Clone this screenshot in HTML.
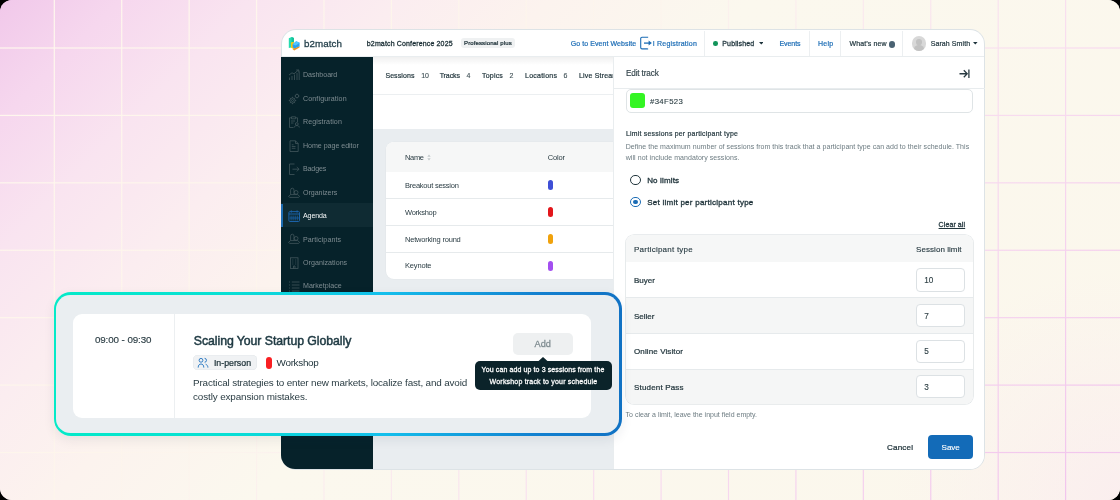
<!DOCTYPE html>
<html><head><meta charset="utf-8">
<style>
*{margin:0;padding:0;box-sizing:border-box}
html,body{width:1120px;height:500px;overflow:hidden;background:#000}
body{font-family:"Liberation Sans",sans-serif;position:relative;color:#1d333b}
.abs{position:absolute}
.t{position:absolute;white-space:nowrap;line-height:1}
#canvas{will-change:transform;position:absolute;left:0;top:0;width:1120px;height:500px;border-radius:12px;overflow:hidden;
 background:linear-gradient(125deg,#efc4ea 0%,#f5d8ee 12%,#fae9ef 24%,#fcf2ee 38%,#fbf7ee 55%,#fbf8ed 75%,#fbf6ee 100%)}
#frame{position:absolute;left:281.6px;top:30.3px;width:702.3px;height:439px;border-radius:14px;background:#fff;
 box-shadow:0 0 0 1px #dde3e6}
.side{position:absolute;left:281.1px;top:57px;width:92.3px;height:412.3px;background:#06222a;border-radius:0 0 0 14px}
.main{position:absolute;left:373.4px;top:57px;width:240.6px;height:412.3px;background:#e9edf0}
.tabs{position:absolute;left:373.4px;top:57px;width:240.6px;height:72.2px;background:#fff}
.panel{position:absolute;left:613.5px;top:57px;width:370.4px;height:412.3px;background:#fff;border-radius:0 0 14px 0}
.pshadow{position:absolute;left:612.8px;top:57px;width:1px;height:412.3px;background:#e9edef}
.hshadow{position:absolute;left:373px;top:57px;width:241px;height:8px;background:linear-gradient(rgba(0,0,0,0.06),rgba(0,0,0,0))}
.hd{font-size:8px;color:#1d333b}
.blue{color:#1b6cb5}
.div{position:absolute;top:30.5px;width:1px;height:26.5px;background:#eceff1}
.si{font-size:7.6px;color:#8c9a9f}
.ico{position:absolute}
.tab{font-size:8px;font-weight:bold;color:#22363d}
.cnt{font-size:8px;color:#5b6b71}
.cell{font-size:7.2px;color:#2a3c43}
.pill{position:absolute;width:5px;height:10px;border-radius:3px}
.sub{font-size:6.8px;color:#7f8c91}
.pt{font-size:7.6px;color:#1f333a}
.inp{position:absolute;left:916.3px;width:48.4px;height:23.2px;border:1px solid #dce1e4;border-radius:4px;background:#fff}
.inpt{font-size:7.6px;color:#3a4a50}
</style></head><body>
<div id="canvas">
<svg class="abs" style="left:0;top:0" width="1120" height="500">
<defs><linearGradient id="bgg" gradientUnits="userSpaceOnUse" x1="0" y1="0" x2="800" y2="800"><stop offset="0.0000" stop-color="#f1c8ea"/><stop offset="0.0750" stop-color="#f6d7ee"/><stop offset="0.1562" stop-color="#f9e4f0"/><stop offset="0.2500" stop-color="#fbedf0"/><stop offset="0.3438" stop-color="#fcf3ee"/><stop offset="0.4688" stop-color="#fbf8ee"/><stop offset="1.0000" stop-color="#fbf7ec"/></linearGradient>
<linearGradient id="lg" gradientUnits="userSpaceOnUse" x1="0" y1="0" x2="800" y2="800"><stop offset="0.0000" stop-color="#fff8ee"/><stop offset="0.1875" stop-color="#fef6ec"/><stop offset="0.3438" stop-color="#fdf5ec"/><stop offset="0.4250" stop-color="#fcf4ed"/><stop offset="0.5312" stop-color="#faebee"/><stop offset="0.6875" stop-color="#f8ddef"/><stop offset="1.0000" stop-color="#f1c3ed"/></linearGradient><radialGradient id="rg" gradientUnits="userSpaceOnUse" cx="1120" cy="500" r="230"><stop offset="0" stop-color="#fae8f0" stop-opacity="0.6"/><stop offset="1" stop-color="#fbeaf0" stop-opacity="0"/></radialGradient></defs>
<rect x="0" y="0" width="1120" height="500" fill="url(#bgg)"/><rect x="0" y="0" width="1120" height="500" fill="url(#rg)"/>
<rect x="53.70" y="0" width="1.2" height="500" fill="url(#lg)"/><rect x="121.12" y="0" width="1.2" height="500" fill="url(#lg)"/><rect x="188.54" y="0" width="1.2" height="500" fill="url(#lg)"/><rect x="255.96" y="0" width="1.2" height="500" fill="url(#lg)"/><rect x="323.38" y="0" width="1.2" height="500" fill="url(#lg)"/><rect x="390.80" y="0" width="1.2" height="500" fill="url(#lg)"/><rect x="458.22" y="0" width="1.2" height="500" fill="url(#lg)"/><rect x="525.64" y="0" width="1.2" height="500" fill="url(#lg)"/><rect x="593.06" y="0" width="1.2" height="500" fill="url(#lg)"/><rect x="660.48" y="0" width="1.2" height="500" fill="url(#lg)"/><rect x="727.90" y="0" width="1.2" height="500" fill="url(#lg)"/><rect x="795.32" y="0" width="1.2" height="500" fill="url(#lg)"/><rect x="862.74" y="0" width="1.2" height="500" fill="url(#lg)"/><rect x="930.16" y="0" width="1.2" height="500" fill="url(#lg)"/><rect x="997.58" y="0" width="1.2" height="500" fill="url(#lg)"/><rect x="1065.00" y="0" width="1.2" height="500" fill="url(#lg)"/><rect x="0" y="47.40" width="1120" height="1.2" fill="url(#lg)"/><rect x="0" y="114.82" width="1120" height="1.2" fill="url(#lg)"/><rect x="0" y="182.24" width="1120" height="1.2" fill="url(#lg)"/><rect x="0" y="249.66" width="1120" height="1.2" fill="url(#lg)"/><rect x="0" y="317.08" width="1120" height="1.2" fill="url(#lg)"/><rect x="0" y="384.50" width="1120" height="1.2" fill="url(#lg)"/><rect x="0" y="451.92" width="1120" height="1.2" fill="url(#lg)"/></svg>
<div id="frame"></div>
<!-- header -->
<svg class="ico" style="left:285px;top:34px" width="20" height="20" viewBox="0 0 20 20">
 <path d="M3.8 4.2 L6.6 3.1 L9 3.9 L9 9.2 L6.4 10.2 L6.4 13.6 L3.8 13.9Z" fill="#26dcb0"/>
 <path d="M6.6 3.1 L9 3.9 L9 8.2 L6.6 9Z" fill="#16c29a"/>
 <path d="M6 8.2 L9 8.1 L9 15 L6 13.8Z" fill="#f9c515"/>
 <path d="M7.5 15 L14.5 12 L14.5 13.6 L9.2 16.4Z" fill="#f2951e"/>
 <path d="M7.6 10.2 L11.2 7.3 L14.6 8.7 L14.6 12.2 L9.4 14.4 L7.6 13.2Z" fill="#2a9ff0"/>
 <path d="M7.6 10.2 L11.2 7.3 L14.6 8.7 L10.8 11.6Z" fill="#52c6ff"/>
</svg>
<div class="abs" style="left:461px;top:38px;width:54px;height:10.2px;background:#eff1f2;border-radius:3px"></div>
<svg class="ico" style="left:639px;top:36px" width="14" height="14" viewBox="0 0 14 14">
 <path d="M8.6 1.7 V1.2 H3 Q1.7 1.2 1.7 2.5 V11.6 Q1.7 12.9 3 12.9 H8.6 V12.4" fill="none" stroke="#1b6cb5" stroke-width="1.1"/>
 <path d="M5 7.1 H10.2" fill="none" stroke="#1b6cb5" stroke-width="1.3"/>
 <path d="M9.6 4.6 L12.9 7.1 L9.6 9.6Z" fill="#1b6cb5"/>
</svg>
<div class="div" style="left:704px"></div>
<div class="abs" style="left:713.2px;top:41px;width:4.6px;height:4.6px;border-radius:50%;background:#12945a"></div>
<svg class="ico" style="left:758.5px;top:42.2px" width="4.6" height="2.6" viewBox="0 0 4.6 2.6"><path d="M0 0H4.6L2.3 2.6Z" fill="#1d333b"/></svg>
<div class="div" style="left:809px"></div>
<div class="div" style="left:840px"></div>
<div class="abs" style="left:888.5px;top:41.2px;width:6.6px;height:6.6px;border-radius:50%;background:#4a6272"></div>
<div class="div" style="left:902.3px"></div>
<div class="abs" style="left:911.5px;top:36.3px;width:14.7px;height:14.7px;border-radius:50%;background:#d8d8d8;overflow:hidden">
 <div class="abs" style="left:4.5px;top:3px;width:5.7px;height:5.7px;border-radius:50%;background:#c2c2c2"></div>
 <div class="abs" style="left:2.5px;top:9px;width:9.7px;height:8px;border-radius:50%;background:#c2c2c2"></div>
</div>
<svg class="ico" style="left:973px;top:42.2px" width="4.6" height="2.6" viewBox="0 0 4.6 2.6"><path d="M0 0H4.6L2.3 2.6Z" fill="#1d333b"/></svg>
<div class="abs" style="left:281.6px;top:56.4px;width:702.3px;height:0.8px;background:#e9edef"></div>

<div class="t" style="left:304.00px;top:39.00px;font-size:9.8px;color:#1e3b46;letter-spacing:0.067px;-webkit-text-stroke:0.274px #1e3b46;">b2match</div>
<div class="t" style="left:366.80px;top:40.00px;font-size:7.0px;color:#182c33;letter-spacing:0.150px;-webkit-text-stroke:0.280px #182c33;">b2match Conference 2025</div>
<div class="t" style="left:464.00px;top:40.00px;font-size:6.0px;color:#1a2e35;letter-spacing:0.125px;-webkit-text-stroke:0.240px #1a2e35;">Professional plus</div>
<div class="t" style="left:570.80px;top:40.00px;font-size:7.0px;color:#1b6cb5;letter-spacing:0.072px;-webkit-text-stroke:0.196px #1b6cb5;">Go to Event Website</div>
<div class="t" style="left:652.70px;top:40.00px;font-size:7.0px;color:#1b6cb5;letter-spacing:0.223px;-webkit-text-stroke:0.196px #1b6cb5;">I Registration</div>
<div class="t" style="left:722.30px;top:40.00px;font-size:7.0px;color:#1d333b;letter-spacing:0.138px;-webkit-text-stroke:0.280px #1d333b;">Published</div>
<div class="t" style="left:779.40px;top:40.00px;font-size:7.0px;color:#1b6cb5;letter-spacing:-0.040px;-webkit-text-stroke:0.196px #1b6cb5;">Events</div>
<div class="t" style="left:818.00px;top:40.00px;font-size:7.0px;color:#1b6cb5;letter-spacing:0.233px;-webkit-text-stroke:0.196px #1b6cb5;">Help</div>
<div class="t" style="left:849.60px;top:40.00px;font-size:7.0px;color:#1d333b;letter-spacing:0.100px;-webkit-text-stroke:0.196px #1d333b;">What’s new</div>
<div class="t" style="left:930.70px;top:40.00px;font-size:7.0px;color:#1d333b;letter-spacing:0.090px;-webkit-text-stroke:0.196px #1d333b;">Sarah Smith</div>

<!-- sidebar -->
<div class="side"></div>
<div class="abs" style="left:281.1px;top:203.3px;width:92.3px;height:23.7px;background:#0f2b33"></div>
<div class="abs" style="left:281.1px;top:203.5px;width:2.2px;height:23.5px;background:#1c6cb2"></div>
<svg class="ico" style="left:288px;top:69.30px" width="12" height="12" viewBox="0 0 12 12" fill="none" stroke="#46595f" stroke-width="0.75"><path d="M1.5 11V8.5M4 11V7M6.5 11V5.5M9 11V4M11.2 11V2.5" /><path d="M1 6 L4 3.8 L6 4.8 L10.5 1" /><path d="M8.2 1 H10.8 V3.4"/></svg>
<svg class="ico" style="left:288px;top:92.75px" width="12" height="12" viewBox="0 0 12 12" fill="none" stroke="#46595f" stroke-width="0.75"><circle cx="4.5" cy="7.5" r="2.6"/><circle cx="4.5" cy="7.5" r="1"/><path d="M4.5 3.8V4.9M4.5 10.1V11.2M0.8 7.5H1.9M7.1 7.5H8.2M1.9 4.9L2.6 5.6M6.4 9.4L7.1 10.1M1.9 10.1L2.6 9.4M6.4 5.6L7.1 4.9"/><circle cx="9" cy="3" r="1.7"/><path d="M9 0.6V1.3M9 4.7V5.4M6.6 3H7.3M10.7 3H11.4"/></svg>
<svg class="ico" style="left:288px;top:116.20px" width="12" height="12" viewBox="0 0 12 12" fill="none" stroke="#46595f" stroke-width="0.75"><path d="M3.5 1.8H1.5V11.5H5.5M8 1.8H9.5V6"/><path d="M3.5 0.8H7.5V2.8H3.5Z"/><path d="M3 5H7M3 7H5.5"/><circle cx="8.8" cy="8" r="1.4"/><path d="M6.3 11.5C6.5 10 7.5 9.6 8.8 9.6C10.1 9.6 11.1 10 11.3 11.5"/></svg>
<svg class="ico" style="left:288px;top:139.65px" width="12" height="12" viewBox="0 0 12 12" fill="none" stroke="#46595f" stroke-width="0.75"><path d="M2 0.8H7.5L10.2 3.5V11.5H2Z"/><path d="M7.5 0.8V3.5H10.2"/><path d="M3.8 6.5H7.5M3.8 8.3H7.5M3.8 4.8H5.5"/></svg>
<svg class="ico" style="left:288px;top:163.10px" width="12" height="12" viewBox="0 0 12 12" fill="none" stroke="#46595f" stroke-width="0.75"><path d="M6.5 1H1.5V11.5H6.5"/><path d="M4.5 6.2H11M8.8 4L11 6.2L8.8 8.4"/></svg>
<svg class="ico" style="left:288px;top:186.55px" width="12" height="12" viewBox="0 0 12 12" fill="none" stroke="#46595f" stroke-width="0.75"><path d="M2.6 7.6V3.2Q2.6 1.2 4.3 1.2Q6 1.2 6 3.2V7.6"/><circle cx="8.1" cy="5.4" r="1.9"/><path d="M0.6 9.3L2.6 7.6H9.6L11.6 9.3L10.6 10.4H1.6Z"/></svg>
<svg class="ico" style="left:288px;top:209.55px" width="12" height="12" viewBox="0 0 12 12" fill="none" stroke="#1b62a8" stroke-width="1"><rect x="0.9" y="1.6" width="10.6" height="9.9" rx="1"/><path d="M3.3 0.4V2.6M9.1 0.4V2.6M0.9 4H11.5" /><path d="M3.1 5.6V10.4M5.1 5.6V10.4M7.2 5.6V10.4M9.3 5.6V10.4M1.5 8H11" stroke-width="0.8"/></svg>
<svg class="ico" style="left:288px;top:233.45px" width="12" height="12" viewBox="0 0 12 12" fill="none" stroke="#46595f" stroke-width="0.75"><path d="M2.6 7.6V3.2Q2.6 1.2 4.3 1.2Q6 1.2 6 3.2V7.6"/><circle cx="8.1" cy="5.4" r="1.9"/><path d="M0.6 9.3L2.6 7.6H9.6L11.6 9.3L10.6 10.4H1.6Z"/></svg>
<svg class="ico" style="left:288px;top:256.90px" width="12" height="12" viewBox="0 0 12 12" fill="none" stroke="#46595f" stroke-width="0.75"><rect x="2.5" y="0.8" width="7.5" height="10.7"/><path d="M4.3 3H5.3M7.2 3H8.2M4.3 5H5.3M7.2 5H8.2M4.3 7H5.3M7.2 7H8.2M5.5 11.5V9H7V11.5"/></svg>
<svg class="ico" style="left:288px;top:280.35px" width="12" height="12" viewBox="0 0 12 12" fill="none" stroke="#46595f" stroke-width="0.75"><path d="M1 2H2M1 5H2M1 8H2M1 11H2M3.8 2H11.5M3.8 5H11.5M3.8 8H11.5M3.8 11H11.5"/></svg>
<div class="t" style="left:303.00px;top:72.00px;font-size:7.1px;color:#7e8c91;letter-spacing:-0.050px;">Dashboard</div>
<div class="t" style="left:303.00px;top:96.00px;font-size:7.1px;color:#7e8c91;letter-spacing:0.117px;">Configuration</div>
<div class="t" style="left:303.00px;top:119.00px;font-size:7.1px;color:#7e8c91;letter-spacing:0.091px;">Registration</div>
<div class="t" style="left:303.00px;top:143.00px;font-size:7.1px;color:#7e8c91;letter-spacing:-0.040px;">Home page editor</div>
<div class="t" style="left:303.00px;top:166.00px;font-size:7.1px;color:#7e8c91;letter-spacing:-0.160px;">Badges</div>
<div class="t" style="left:303.00px;top:190.00px;font-size:7.1px;color:#7e8c91;letter-spacing:-0.044px;">Organizers</div>
<div class="t" style="left:303.00px;top:213.00px;font-size:7.1px;color:#f4f6f7;letter-spacing:-0.140px;">Agenda</div>
<div class="t" style="left:303.00px;top:237.00px;font-size:7.1px;color:#7e8c91;letter-spacing:0.091px;">Participants</div>
<div class="t" style="left:303.00px;top:260.00px;font-size:7.1px;color:#7e8c91;letter-spacing:0.033px;">Organizations</div>
<div class="t" style="left:303.00px;top:283.00px;font-size:7.1px;color:#7e8c91;">Marketplace</div>


<!-- main -->
<div class="main"></div>
<div class="tabs"></div>
<div class="abs" style="left:373px;top:94px;width:241px;height:1px;background:#eceff1"></div>
<div class="hshadow"></div>

<div class="abs" style="left:385.8px;top:142.2px;width:260px;height:136.8px;background:#fff;border-radius:8px;box-shadow:0 0 0 0.6px #e3e7ea"></div>
<div class="abs" style="left:385.8px;top:142.2px;width:260px;height:29.7px;background:#f6f7f7;border-radius:8px 8px 0 0"></div>
<svg class="ico" style="left:426.5px;top:154px" width="4" height="7" viewBox="0 0 4 7"><path d="M0.3 2.8L2 0.6L3.7 2.8ZM0.3 4.2L2 6.4L3.7 4.2Z" fill="#c3cacd"/></svg>
<div class="pill" style="left:547.8px;top:180px;background:#3e4fd6"></div>
<div class="abs" style="left:385.8px;top:198px;width:260px;height:0.8px;background:#e6eaec"></div>
<div class="pill" style="left:547.8px;top:207px;background:#e3161b"></div>
<div class="abs" style="left:385.8px;top:225px;width:260px;height:0.8px;background:#e6eaec"></div>
<div class="pill" style="left:547.8px;top:234px;background:#f0a20c"></div>
<div class="abs" style="left:385.8px;top:252px;width:260px;height:0.8px;background:#e6eaec"></div>
<div class="pill" style="left:547.8px;top:261px;background:#a34ff0"></div>
<div class="t" style="left:385.40px;top:72.00px;font-size:7.0px;color:#22363d;letter-spacing:0.086px;-webkit-text-stroke:0.196px #22363d;">Sessions</div>
<div class="t" style="left:421.20px;top:72.00px;font-size:7.0px;color:#3e4f55;-webkit-text-stroke:0.105px #3e4f55;">10</div>
<div class="t" style="left:439.70px;top:72.00px;font-size:7.0px;color:#22363d;letter-spacing:-0.100px;-webkit-text-stroke:0.196px #22363d;">Tracks</div>
<div class="t" style="left:466.60px;top:72.00px;font-size:7.0px;color:#3e4f55;-webkit-text-stroke:0.105px #3e4f55;">4</div>
<div class="t" style="left:482.00px;top:72.00px;font-size:7.0px;color:#22363d;letter-spacing:0.200px;-webkit-text-stroke:0.196px #22363d;">Topics</div>
<div class="t" style="left:509.60px;top:72.00px;font-size:7.0px;color:#3e4f55;-webkit-text-stroke:0.105px #3e4f55;">2</div>
<div class="t" style="left:525.00px;top:72.00px;font-size:7.0px;color:#22363d;letter-spacing:0.250px;-webkit-text-stroke:0.196px #22363d;">Locations</div>
<div class="t" style="left:563.60px;top:72.00px;font-size:7.0px;color:#3e4f55;-webkit-text-stroke:0.105px #3e4f55;">6</div>
<div class="t" style="left:579.00px;top:72.00px;font-size:7.0px;color:#22363d;letter-spacing:0.182px;-webkit-text-stroke:0.196px #22363d;">Live Streams</div>
<div class="t" style="left:405.00px;top:154.00px;font-size:7.5px;color:#2a3c43;letter-spacing:-0.333px;">Name</div>
<div class="t" style="left:547.80px;top:154.00px;font-size:7.5px;color:#2a3c43;letter-spacing:-0.150px;">Color</div>
<div class="t" style="left:405.00px;top:182.00px;font-size:7.5px;color:#2a3c43;letter-spacing:-0.247px;">Breakout session</div>
<div class="t" style="left:405.00px;top:209.00px;font-size:7.5px;color:#2a3c43;letter-spacing:-0.286px;">Workshop</div>
<div class="t" style="left:405.00px;top:236.00px;font-size:7.5px;color:#2a3c43;letter-spacing:-0.200px;">Networking round</div>
<div class="t" style="left:405.00px;top:262.00px;font-size:7.5px;color:#2a3c43;letter-spacing:-0.167px;">Keynote</div>

<!-- panel -->
<div class="pshadow"></div><div class="panel"></div>
<svg class="ico" style="left:958.5px;top:68.5px" width="11" height="9.5" viewBox="0 0 11 9.5">
 <path d="M0.5 4.75H8 M4.8 1.3 L8.2 4.75 L4.8 8.2 M9.9 0.5V9" fill="none" stroke="#2a3b42" stroke-width="1.3"/>
</svg>
<div class="abs" style="left:613.5px;top:87.5px;width:371px;height:0.8px;background:#e8ecee"></div>
<div class="abs" style="left:625.6px;top:89px;width:347.6px;height:23.6px;border:1px solid #dfe4e6;border-radius:5px"></div>
<div class="abs" style="left:629.6px;top:92.8px;width:15.6px;height:15.6px;border-radius:3px;background:#34f523"></div>

<div class="abs" style="left:630px;top:174.8px;width:10.5px;height:10.5px;border-radius:50%;border:1.4px solid #22363d"></div>
<div class="abs" style="left:630px;top:196.8px;width:10.5px;height:10.5px;border-radius:50%;border:1.4px solid #1b6cb5"></div>
<div class="abs" style="left:632.9px;top:199.7px;width:4.7px;height:4.7px;border-radius:50%;background:#1b6cb5"></div>

<div class="abs" style="left:625.6px;top:235px;width:347px;height:169.2px;border-radius:8px;background:#fff;box-shadow:0 0 0 0.8px #e2e6e8;overflow:hidden">
 <div class="abs" style="left:0;top:0;width:100%;height:26.7px;background:#f6f7f7"></div>
 <div class="abs" style="left:0;top:62.2px;width:100%;height:36.2px;background:#f5f6f6"></div>
 <div class="abs" style="left:0;top:133.8px;width:100%;height:36px;background:#f5f6f6"></div>
 <div class="abs" style="left:0;top:62px;width:100%;height:0.8px;background:#e6eaec"></div>
 <div class="abs" style="left:0;top:98.2px;width:100%;height:0.8px;background:#e6eaec"></div>
 <div class="abs" style="left:0;top:133.6px;width:100%;height:0.8px;background:#e6eaec"></div>
</div>
<div class="inp" style="top:268.4px"></div>
<div class="inp" style="top:304px"></div>
<div class="inp" style="top:339.5px"></div>
<div class="inp" style="top:375.3px"></div>
<div class="abs" style="left:928.3px;top:435px;width:44.8px;height:23.5px;border-radius:4px;background:#136bb8"></div>
<div class="t" style="left:625.90px;top:70.00px;font-size:8.2px;color:#2b3d44;letter-spacing:-0.133px;-webkit-text-stroke:0.123px #2b3d44;">Edit track</div>
<div class="t" style="left:650.00px;top:98.00px;font-size:7.8px;color:#2f4046;letter-spacing:0.350px;-webkit-text-stroke:0.117px #2f4046;">#34F523</div>
<div class="t" style="left:626.00px;top:131.00px;font-size:6.9px;color:#22363d;letter-spacing:0.235px;-webkit-text-stroke:0.193px #22363d;">Limit sessions per participant type</div>
<div class="t" style="left:625.75px;top:143.00px;font-size:7.0px;color:#6c7b81;letter-spacing:0.043px;">Define the maximum number of sessions from this track that a participant type can add to their schedule. This</div>
<div class="t" style="left:625.75px;top:154.00px;font-size:7.0px;color:#6c7b81;letter-spacing:0.057px;">will not include mandatory sessions.</div>
<div class="t" style="left:647.20px;top:177.00px;font-size:8.0px;color:#1f333a;letter-spacing:0.150px;-webkit-text-stroke:0.320px #1f333a;">No limits</div>
<div class="t" style="left:647.20px;top:199.00px;font-size:8.0px;color:#1f333a;letter-spacing:0.255px;-webkit-text-stroke:0.320px #1f333a;">Set limit per participant type</div>
<div class="t" style="left:938.60px;top:221.00px;font-size:7.0px;color:#22363d;letter-spacing:0.100px;-webkit-text-stroke:0.280px #22363d;text-decoration:underline;">Clear all</div>
<div class="t" style="left:634.00px;top:246.00px;font-size:8.0px;color:#263940;letter-spacing:0.240px;-webkit-text-stroke:0.120px #263940;">Participant type</div>
<div class="t" style="left:916.10px;top:246.00px;font-size:8.0px;color:#263940;letter-spacing:0.050px;-webkit-text-stroke:0.120px #263940;">Session limit</div>
<div class="t" style="left:634.00px;top:277.00px;font-size:8.0px;color:#1f333a;-webkit-text-stroke:0.224px #1f333a;">Buyer</div>
<div class="t" style="left:634.00px;top:313.00px;font-size:8.0px;color:#1f333a;-webkit-text-stroke:0.224px #1f333a;">Seller</div>
<div class="t" style="left:634.00px;top:348.00px;font-size:8.0px;color:#1f333a;letter-spacing:0.115px;-webkit-text-stroke:0.224px #1f333a;">Online Visitor</div>
<div class="t" style="left:634.00px;top:384.00px;font-size:8.0px;color:#1f333a;letter-spacing:0.173px;-webkit-text-stroke:0.224px #1f333a;">Student Pass</div>
<div class="t" style="left:924.20px;top:277.00px;font-size:8.2px;color:#2f4046;-webkit-text-stroke:0.123px #2f4046;">10</div>
<div class="t" style="left:924.20px;top:313.00px;font-size:8.2px;color:#2f4046;-webkit-text-stroke:0.123px #2f4046;">7</div>
<div class="t" style="left:924.20px;top:348.00px;font-size:8.2px;color:#2f4046;-webkit-text-stroke:0.123px #2f4046;">5</div>
<div class="t" style="left:924.20px;top:384.00px;font-size:8.2px;color:#2f4046;-webkit-text-stroke:0.123px #2f4046;">3</div>
<div class="t" style="left:625.60px;top:411.00px;font-size:7.0px;color:#6c7b81;">To clear a limit, leave the input field empty.</div>
<div class="t" style="left:887.00px;top:444.00px;font-size:8.1px;color:#1a2e35;letter-spacing:0.160px;-webkit-text-stroke:0.227px #1a2e35;">Cancel</div>
<div class="t" style="left:941.60px;top:444.00px;font-size:8.1px;color:#ffffff;letter-spacing:-0.100px;-webkit-text-stroke:0.121px #ffffff;">Save</div>

<!-- session card -->
<div class="abs" style="left:53.8px;top:291.9px;width:568px;height:143.7px;border-radius:17px;padding:2.7px;background:linear-gradient(90deg,#04eac8 0%,#08e0d4 30%,#14bfec 58%,#1380d0 85%,#1172c4 100%);box-shadow:0 4px 12px rgba(20,40,60,0.08)">
 <div style="width:100%;height:100%;border-radius:14.3px;background:#eaeef1"></div>
</div>
<div class="abs" style="left:73px;top:313.6px;width:518px;height:104px;border-radius:9px;background:#fff"></div>
<div class="abs" style="left:174px;top:313.6px;width:0.8px;height:104px;background:#eceff1"></div>
<div class="abs" style="left:193.2px;top:355.2px;width:63.5px;height:15px;border-radius:4.5px;background:#f0f2f4;box-shadow:inset 0 0 0 0.6px #e4e8eb"></div>
<svg class="ico" style="left:197px;top:357px" width="12" height="12" viewBox="0 0 12 12">
 <circle cx="4" cy="3.3" r="1.9" fill="none" stroke="#2a78c2" stroke-width="0.95"/>
 <path d="M1.2 10.6 C1.2 8.1 2.4 7 4 7 C5.6 7 6.8 8.1 6.8 10.6" fill="none" stroke="#2a78c2" stroke-width="0.95"/>
 <path d="M7.6 1.4 A1.9 1.9 0 0 1 7.6 5.2 M8.6 7.2 C9.9 7.7 10.9 8.7 10.9 10.6" fill="none" stroke="#2a78c2" stroke-width="0.95"/>
</svg>
<div class="abs" style="left:266px;top:357px;width:6.2px;height:11.5px;border-radius:3.1px;background:#f91f22"></div>
<div class="abs" style="left:513px;top:332.8px;width:59.8px;height:22.4px;border-radius:5px;background:#eef0f1"></div>
<div class="abs" style="left:474.6px;top:360.6px;width:137.6px;height:29.8px;border-radius:5px;background:#0b232a"></div>
<svg class="ico" style="left:538px;top:356.8px" width="10" height="4.5" viewBox="0 0 10 4.5"><path d="M0 4.5 L5 0 L10 4.5Z" fill="#0b232a"/></svg>
<div class="t" style="left:94.90px;top:335.00px;font-size:9.8px;color:#2a3c43;letter-spacing:-0.092px;-webkit-text-stroke:0.147px #2a3c43;">09:00 - 09:30</div>
<div class="t" style="left:193.80px;top:335.00px;font-size:12.3px;color:#1e3942;letter-spacing:-0.064px;-webkit-text-stroke:0.492px #1e3942;">Scaling Your Startup Globally</div>
<div class="t" style="left:213.90px;top:359.00px;font-size:8.8px;color:#22363d;-webkit-text-stroke:0.246px #22363d;">In-person</div>
<div class="t" style="left:276.60px;top:358.00px;font-size:9.9px;color:#22363d;letter-spacing:-0.300px;">Workshop</div>
<div class="t" style="left:193.00px;top:378.00px;font-size:9.9px;color:#2a3c43;letter-spacing:-0.144px;">Practical strategies to enter new markets, localize fast, and avoid</div>
<div class="t" style="left:193.00px;top:392.00px;font-size:9.9px;color:#2a3c43;letter-spacing:-0.120px;">costly expansion mistakes.</div>
<div class="t" style="left:534.50px;top:340.00px;font-size:9.2px;color:#7d8a8f;letter-spacing:0.050px;-webkit-text-stroke:0.258px #7d8a8f;">Add</div>
<div class="t" style="left:481.60px;top:366.00px;font-size:7.0px;color:#ffffff;letter-spacing:0.108px;-webkit-text-stroke:0.280px #ffffff;">You can add up to 3 sessions from the</div>
<div class="t" style="left:489.60px;top:378.00px;font-size:7.0px;color:#ffffff;letter-spacing:0.193px;-webkit-text-stroke:0.280px #ffffff;">Workshop track to your schedule</div>

</div>
</body></html>
